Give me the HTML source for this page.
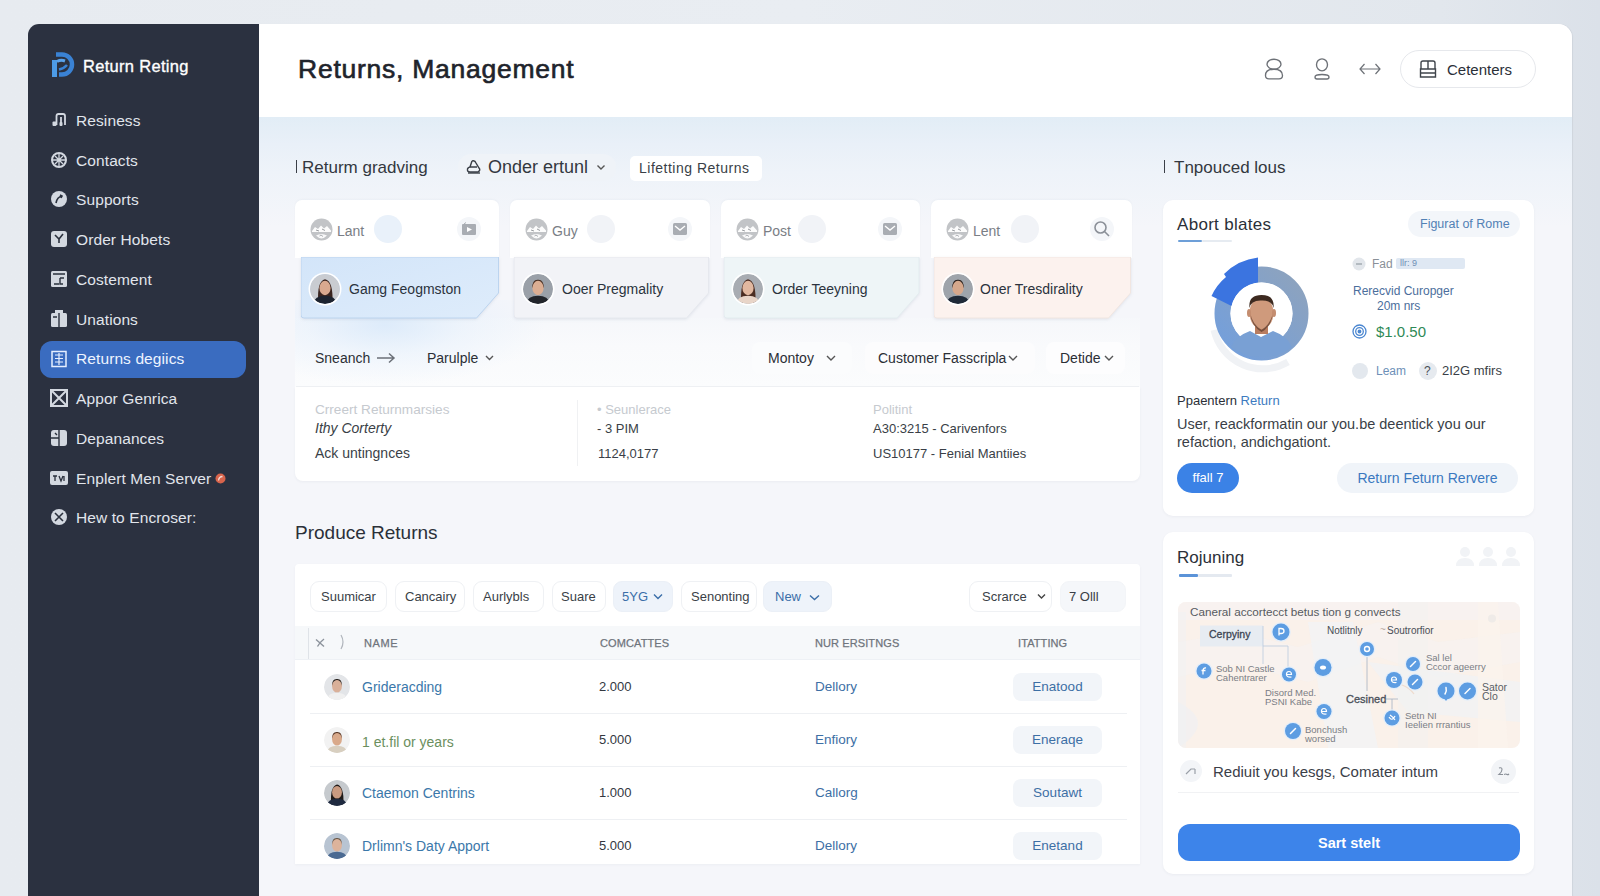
<!DOCTYPE html>
<html><head><meta charset="utf-8">
<style>
*{box-sizing:border-box;margin:0;padding:0}
html,body{width:1600px;height:896px;overflow:hidden}
body{font-family:"Liberation Sans",sans-serif;background:linear-gradient(90deg,#e7ebf0 0%,#e9edf2 50%,#e2e7ed 90%,#dbe1e9 100%);position:relative;color:#2a2f38}
.a{position:absolute}
.t{position:absolute;white-space:nowrap;line-height:1}
#side{left:28px;top:24px;width:231px;height:900px;background:#2b3140;border-top-left-radius:11px}
#main{left:259px;top:24px;width:1313px;height:900px;background:#f5f6fa;border-top-right-radius:14px;overflow:hidden;box-shadow:1px 0 1px rgba(0,0,0,0.06)}
#hdr{left:0;top:0;width:1313px;height:93px;background:#fff}
#grad{left:0;top:93px;width:1313px;height:110px;background:linear-gradient(180deg,#e2edf6 0%,#e9f0f8 25%,#eef3f9 50%,#f5f6fa 100%)}
.nav{position:absolute;left:76px;font-size:15.5px;color:#e1e5ec;line-height:1;letter-spacing:0.1px}
.ico{position:absolute;left:51px;width:17px;height:17px}
</style></head><body>
<div id="side" class="a"></div>
<div id="main" class="a">
  <div id="hdr" class="a"></div>
  <div id="grad" class="a"></div>
</div>
<!-- sidebar content -->
<svg class="a" style="left:50px;top:51px" width="26" height="28" viewBox="0 0 26 28">
  <path d="M4.5 9 V26" stroke="#4d9be6" stroke-width="5"/>
  <path d="M6 3.5 H12 A10 10 0 0 1 12 23.5 H9" fill="none" stroke="#3a82d4" stroke-width="4.5"/>
  <path d="M7 10.5 Q11 8.5 15 10" fill="none" stroke="#5aa2ea" stroke-width="3"/>
  <path d="M9 18.5 Q14 17.5 17 14" fill="none" stroke="#3a82d4" stroke-width="2.5"/>
</svg>
<div class="t" style="left:83px;top:58px;font-size:16.5px;color:#fff;-webkit-text-stroke:0.35px #fff;letter-spacing:0.3px">Return Reting</div>

<div class="a" style="left:40px;top:341px;width:206px;height:37px;border-radius:12px;background:#3a6cc0"></div>
<div class="nav" style="top:113px">Resiness</div>
<div class="nav" style="top:153px">Contacts</div>
<div class="nav" style="top:192px">Supports</div>
<div class="nav" style="top:232px">Order Hobets</div>
<div class="nav" style="top:272px">Costement</div>
<div class="nav" style="top:312px">Unations</div>
<div class="nav" style="top:351px;color:#eef4ff">Returns degiics</div>
<div class="nav" style="top:391px">Appor Genrica</div>
<div class="nav" style="top:431px">Depanances</div>
<div class="nav" style="top:471px">Enplert Men Server</div>
<div class="nav" style="top:510px">Hew to Encroser:</div>
<svg class="a" style="left:215px;top:473px" width="11" height="11" viewBox="0 0 11 11"><circle cx="5.5" cy="5.5" r="5" fill="#d8644c"/><path d="M3.5 7.5 Q4 3.5 7.5 3.5" fill="none" stroke="#f6dcd5" stroke-width="1.3"/></svg>
<svg class="a" style="left:50px;top:111px" width="20" height="420" viewBox="0 0 20 420" fill="#d3d8e0" stroke="#d3d8e0">
  <!-- Resiness y~121 -->
  <g transform="translate(0,0)"><rect x="2.5" y="10.5" width="4" height="4.5" rx="1" stroke="none"/><path d="M6.5 14 V5 Q6.5 3 8.5 3 H13 Q15 3 15 5 V14 M11 14 V6" fill="none" stroke-width="1.8"/><rect x="9.5" y="11" width="3" height="4" rx="1" stroke="none"/></g>
  <!-- Contacts y~160 -->
  <g transform="translate(0,40)"><circle cx="9" cy="9" r="7" fill="none" stroke-width="2"/><path d="M2 9 H16 M9 2 V16 M5 5 L13 13 M13 5 L5 13" fill="none" stroke-width="1.3"/></g>
  <!-- Supports y~199 -->
  <g transform="translate(0,79)"><circle cx="9" cy="9" r="8" stroke="none"/><path d="M6 13 Q7 7 12 6 M10 5 L12 6 L11 8" fill="none" stroke="#2a303d" stroke-width="1.6"/></g>
  <!-- Order Hobets y~239 -->
  <g transform="translate(0,119)"><rect x="1" y="1" width="16" height="16" rx="3" stroke="none"/><path d="M5 5 L9 9 L13 4 M9 9 V13" fill="none" stroke="#2a303d" stroke-width="1.6"/></g>
  <!-- Costement y~279 -->
  <g transform="translate(0,159)"><rect x="1" y="1" width="16" height="16" rx="1.5" stroke="none"/><path d="M3 4 H15 M4 14 H9 M10 8 V14 H13 M10 8 H14" fill="none" stroke="#2a303d" stroke-width="1.4"/></g>
  <!-- Unations y~319 -->
  <g transform="translate(0,199)"><rect x="1" y="3" width="16" height="14" rx="1.5" stroke="none"/><rect x="5" y="0" width="8" height="3" stroke="none"/><path d="M9 3 V17 M3 7 H7" fill="none" stroke="#2a303d" stroke-width="1.4"/></g>
  <!-- Returns y~358 -->
  <g transform="translate(0,239)"><rect x="2" y="1.5" width="14" height="15" fill="none" stroke="#e6efff" stroke-width="1.5"/><path d="M5 5 H13 M5 8.5 H13 M5 12 H13 M9 3 V15" fill="none" stroke="#e6efff" stroke-width="1.2"/></g>
  <!-- Appor y~398 -->
  <g transform="translate(0,278)"><rect x="1" y="1" width="16" height="16" fill="none" stroke-width="2"/><path d="M2 2 L16 16 M16 2 L2 16" fill="none" stroke-width="2"/></g>
  <!-- Depanances y~438 -->
  <g transform="translate(0,318)"><rect x="1" y="1" width="16" height="16" rx="3" stroke="none"/><path d="M9 1 V17 M1 9 H9 M5 4 L7 6" fill="none" stroke="#2a303d" stroke-width="1.4"/></g>
  <!-- Enplert y~478 -->
  <g transform="translate(0,358)"><rect x="0" y="2" width="18" height="14" rx="2" stroke="none"/><path d="M3 7 H7 M5 7 V12 M9 7 L11 12 L13 7 M14 7 V12" fill="none" stroke="#2a303d" stroke-width="1.3"/></g>
  <!-- Hew y~517 -->
  <g transform="translate(0,397)"><circle cx="9" cy="9" r="8" stroke="none"/><path d="M5 5 L13 13 M13 5 L5 13" fill="none" stroke="#2a303d" stroke-width="1.6"/></g>
</svg>

<!-- header -->
<div class="t" style="left:298px;top:56px;font-size:26.5px;color:#1f242c;-webkit-text-stroke:0.65px #1f242c;letter-spacing:0.75px">Returns, Management</div>
<svg class="a" style="left:1262px;top:57px" width="24" height="24" viewBox="0 0 24 24" fill="none" stroke="#6d7177" stroke-width="1.35">
  <ellipse cx="12" cy="7.2" rx="7" ry="5"/><path d="M12 12.2 Q20.5 12.2 20.5 18.5 Q20.5 21.8 17 21.8 H7 Q3.5 21.8 3.5 18.5 Q3.5 12.2 12 12.2 Z"/>
</svg>
<svg class="a" style="left:1310px;top:57px" width="24" height="24" viewBox="0 0 24 24" fill="none" stroke="#6d7177" stroke-width="1.35">
  <ellipse cx="12" cy="7.8" rx="5.5" ry="6"/><path d="M5 20 Q5 17.5 12 17.5 Q19 17.5 19 20 Q19 22 17 22 H7 Q5 22 5 20 Z"/>
</svg>
<svg class="a" style="left:1358px;top:59px" width="24" height="20" viewBox="0 0 24 20" fill="none" stroke="#6d7177" stroke-width="1.2">
  <path d="M2 10 H22 M6.5 5 L2 10 L6.5 15 M17.5 5 L22 10 L17.5 15"/>
</svg>
<div class="a" style="left:1400px;top:50px;width:136px;height:38px;border:1px solid #e6e8ec;border-radius:19px;background:#fff"></div>
<svg class="a" style="left:1419px;top:59px" width="18" height="20" viewBox="0 0 18 20" fill="none" stroke="#3f444b" stroke-width="1.4">
  <path d="M2 10 V4 Q2 2 4 2 H14 Q16 2 16 4 V10 M9 2 V10 M1.5 10 H16.5 V18 H1.5 Z M1.5 14 H16.5"/>
</svg>
<div class="t" style="left:1447px;top:62px;font-size:15px;color:#2a2f38">Cetenters</div>


<!-- ===== section 1 ===== -->
<div class="a" style="left:296px;top:160px;width:1px;height:13px;background:#3a3f47"></div>
<div class="t" style="left:302px;top:159px;font-size:17px;color:#33383f">Returm gradving</div>
<div class="a" style="left:458px;top:154px;width:158px;height:27px;border-radius:13px;background:#eff3f8"></div>
<svg class="a" style="left:465px;top:159px" width="18" height="16" viewBox="0 0 18 16" fill="none" stroke="#3a3f47" stroke-width="1.4">
 <path d="M7 2 Q10 1 11 4 L14 9 Q16 11 13 13 H5 Q2 13 2.5 10 Q3 8 6 8 H12 M7 2 L5 8"/><path d="M3 14 H15"/>
</svg>
<div class="t" style="left:488px;top:158px;font-size:18px;color:#33383f">Onder ertunl</div>
<svg class="a" style="left:596px;top:164px" width="10" height="7" viewBox="0 0 10 7" fill="none" stroke="#555" stroke-width="1.4"><path d="M1.5 1.5 L5 5 L8.5 1.5"/></svg>
<div class="a" style="left:630px;top:156px;width:132px;height:25px;border-radius:5px;background:#fff"></div>
<div class="t" style="left:639px;top:161px;font-size:14px;letter-spacing:0.5px;color:#3a3f47">Lifetting Returns</div>

<!-- filter/info panel -->
<div class="a" style="left:295px;top:387px;width:845px;height:94px;border-radius:0 0 8px 8px;background:#fff;box-shadow:0 1px 3px rgba(30,50,80,0.05)"></div>
<div class="a" style="left:295px;top:318px;width:845px;height:69px;background:linear-gradient(180deg,rgba(246,248,251,0.6) 0%,#f9fafc 40%,#fbfcfd 100%)"></div>
<div class="a" style="left:295px;top:300px;width:845px;height:87px;background:radial-gradient(ellipse 160px 60px at 90px 25px,rgba(215,232,250,0.8) 0%,rgba(225,238,252,0.4) 50%,rgba(255,255,255,0) 100%)"></div>
<div class="a" style="left:296px;top:386px;width:843px;height:1px;background:#eef0f3"></div>

<div class="a" style="left:295px;top:200px;width:204px;height:58px;border-radius:7px 7px 0 0;background:#fff;box-shadow:0 -1px 2px rgba(40,60,90,0.03)"></div>
<svg class="a" style="left:300.5px;top:257px;filter:drop-shadow(0 1.5px 1.5px rgba(40,60,100,0.10))" width="199.5" height="64" viewBox="0 0 199.5 64"><path d="M0 0 H197.5 V36 L175.5 61 H3 Q0 61 0 58 Z" fill="url(#c1g)" stroke="#bcd4ef" stroke-width="1"/><defs><linearGradient id="c1g" x1="0" y1="0" x2="1" y2="1"><stop offset="0" stop-color="#d3e5f9"/><stop offset="1" stop-color="#deecfb"/></linearGradient></defs></svg>
<svg class="a" style="left:310px;top:218px" width="23" height="23" viewBox="0 0 23 23"><circle cx="11.5" cy="11.5" r="11" fill="#c2c4c7"/><path d="M2 13 L5 9 L8 11 L11 7.5 L14 10.5 L17 8 L21 12.5 L21 14 H2 Z" fill="#fff" opacity="0.95"/><path d="M6 12 L9 13 M12 11 L15 12.5" stroke="#9a9da1" stroke-width="1"/><path d="M6 17.5 Q11.5 14.5 17 17.5 Q14 20.5 11.5 20.5 Q9 20.5 6 17.5 Z" fill="#fff" opacity="0.9"/><path d="M9.5 18 L11 17 L13 18.5" stroke="#a3a6aa" stroke-width="0.9" fill="none"/></svg>
<div class="t" style="left:337px;top:224px;font-size:14px;color:#7a7e85">Lant</div>
<div class="a" style="left:374px;top:215px;width:28px;height:28px;border-radius:50%;background:#e9f1fa"></div>
<div class="a" style="left:457px;top:217px;width:24px;height:24px;border-radius:50%;background:#f4f6f9"></div>
<svg class="a" style="left:461px;top:222px" width="16" height="14" viewBox="0 0 16 14"><rect x="1" y="2" width="14" height="11" rx="1" fill="#a9adb3"/><path d="M6 5 L11 7.5 L6 10 Z" fill="#fff"/><path d="M3 2 L5 0.5" stroke="#a9adb3"/></svg>
<svg class="a" style="left:310px;top:274px;border-radius:50%;box-shadow:0 0 0 1.5px #fff" width="30" height="30" viewBox="0 0 30 30"><clipPath id="c325_289"><circle cx="15" cy="15" r="15"/></clipPath><g clip-path="url(#c325_289)"><rect width="30" height="30" fill="#c9ccd1"/><path d="M8.25 28.5 Q6.75 7.5 15 5.25 Q23.25 6.75 22.5 28.5 Z" fill="#3a2520"/><ellipse cx="15" cy="14" rx="5.6" ry="7.2" fill="#d9a98f"/><path d="M3.0 30 Q4.5 21.75 15 21.75 Q25.5 21.75 27.0 30 Z" fill="#1d2430"/></g></svg>
<div class="t" style="left:349px;top:282px;font-size:14px;color:#2b333d">Gamg Feogmston</div>
<div class="a" style="left:510px;top:200px;width:200px;height:58px;border-radius:7px 7px 0 0;background:#fff;box-shadow:0 -1px 2px rgba(40,60,90,0.03)"></div>
<svg class="a" style="left:513.5px;top:257px;filter:drop-shadow(0 1.5px 1.5px rgba(40,60,100,0.10))" width="196.5" height="64" viewBox="0 0 196.5 64"><path d="M0 0 H194.5 V36 L172.5 61 H3 Q0 61 0 58 Z" fill="#f2f3f7" stroke="#e6e8ee" stroke-width="1"/></svg>
<svg class="a" style="left:525px;top:218px" width="23" height="23" viewBox="0 0 23 23"><circle cx="11.5" cy="11.5" r="11" fill="#c2c4c7"/><path d="M2 13 L5 9 L8 11 L11 7.5 L14 10.5 L17 8 L21 12.5 L21 14 H2 Z" fill="#fff" opacity="0.95"/><path d="M6 12 L9 13 M12 11 L15 12.5" stroke="#9a9da1" stroke-width="1"/><path d="M6 17.5 Q11.5 14.5 17 17.5 Q14 20.5 11.5 20.5 Q9 20.5 6 17.5 Z" fill="#fff" opacity="0.9"/><path d="M9.5 18 L11 17 L13 18.5" stroke="#a3a6aa" stroke-width="0.9" fill="none"/></svg>
<div class="t" style="left:552px;top:224px;font-size:14px;color:#7a7e85">Guy</div>
<div class="a" style="left:587px;top:215px;width:28px;height:28px;border-radius:50%;background:#f1f3f7"></div>
<div class="a" style="left:668px;top:217px;width:24px;height:24px;border-radius:50%;background:#f4f6f9"></div>
<svg class="a" style="left:672px;top:222px" width="16" height="14" viewBox="0 0 16 14"><rect x="1" y="1" width="14" height="12" rx="1.5" fill="#a9adb3"/><path d="M3 4 L8 8 L13 4" fill="none" stroke="#fff" stroke-width="1.4"/></svg>
<svg class="a" style="left:523px;top:274px;border-radius:50%;box-shadow:0 0 0 1.5px #fff" width="30" height="30" viewBox="0 0 30 30"><clipPath id="c538_289"><circle cx="15" cy="15" r="15"/></clipPath><g clip-path="url(#c538_289)"><rect width="30" height="30" fill="#9aa0a8"/><path d="M9.3 14.25 Q9.0 5.25 15 5.7 Q21.0 5.25 20.7 14.25 Q18.0 9.0 15 9.3 Q12.0 9.0 9.3 14.25 Z" fill="#4a3024"/><ellipse cx="15" cy="14" rx="5.6" ry="7.2" fill="#dcae93"/><path d="M3.0 30 Q4.5 21.75 15 21.75 Q25.5 21.75 27.0 30 Z" fill="#22252b"/></g></svg>
<div class="t" style="left:562px;top:282px;font-size:14px;color:#2b333d">Ooer Pregmality</div>
<div class="a" style="left:721px;top:200px;width:199px;height:58px;border-radius:7px 7px 0 0;background:#fff;box-shadow:0 -1px 2px rgba(40,60,90,0.03)"></div>
<svg class="a" style="left:724px;top:257px;filter:drop-shadow(0 1.5px 1.5px rgba(40,60,100,0.10))" width="197" height="64" viewBox="0 0 197 64"><path d="M0 0 H195 V36 L173 61 H3 Q0 61 0 58 Z" fill="#eef5f7" stroke="#e3ecef" stroke-width="1"/></svg>
<svg class="a" style="left:736px;top:218px" width="23" height="23" viewBox="0 0 23 23"><circle cx="11.5" cy="11.5" r="11" fill="#c2c4c7"/><path d="M2 13 L5 9 L8 11 L11 7.5 L14 10.5 L17 8 L21 12.5 L21 14 H2 Z" fill="#fff" opacity="0.95"/><path d="M6 12 L9 13 M12 11 L15 12.5" stroke="#9a9da1" stroke-width="1"/><path d="M6 17.5 Q11.5 14.5 17 17.5 Q14 20.5 11.5 20.5 Q9 20.5 6 17.5 Z" fill="#fff" opacity="0.9"/><path d="M9.5 18 L11 17 L13 18.5" stroke="#a3a6aa" stroke-width="0.9" fill="none"/></svg>
<div class="t" style="left:763px;top:224px;font-size:14px;color:#7a7e85">Post</div>
<div class="a" style="left:798px;top:215px;width:28px;height:28px;border-radius:50%;background:#f1f3f7"></div>
<div class="a" style="left:878px;top:217px;width:24px;height:24px;border-radius:50%;background:#f4f6f9"></div>
<svg class="a" style="left:882px;top:222px" width="16" height="14" viewBox="0 0 16 14"><rect x="1" y="1" width="14" height="12" rx="1.5" fill="#a9adb3"/><path d="M3 4 L8 8 L13 4" fill="none" stroke="#fff" stroke-width="1.4"/></svg>
<svg class="a" style="left:733px;top:274px;border-radius:50%;box-shadow:0 0 0 1.5px #fff" width="30" height="30" viewBox="0 0 30 30"><clipPath id="c748_289"><circle cx="15" cy="15" r="15"/></clipPath><g clip-path="url(#c748_289)"><rect width="30" height="30" fill="#a8acb2"/><path d="M8.25 28.5 Q6.75 7.5 15 5.25 Q23.25 6.75 22.5 28.5 Z" fill="#4b2d22"/><ellipse cx="15" cy="14" rx="5.6" ry="7.2" fill="#e1b8a0"/><path d="M3.0 30 Q4.5 21.75 15 21.75 Q25.5 21.75 27.0 30 Z" fill="#e8d5c8"/></g></svg>
<div class="t" style="left:772px;top:282px;font-size:14px;color:#2b333d">Order Teeyning</div>
<div class="a" style="left:931px;top:200px;width:201px;height:58px;border-radius:7px 7px 0 0;background:#fff;box-shadow:0 -1px 2px rgba(40,60,90,0.03)"></div>
<svg class="a" style="left:933.5px;top:257px;filter:drop-shadow(0 1.5px 1.5px rgba(40,60,100,0.10))" width="198.5" height="64" viewBox="0 0 198.5 64"><path d="M0 0 H196.5 V36 L174.5 61 H3 Q0 61 0 58 Z" fill="#fcf2ee" stroke="#f1e6e1" stroke-width="1"/></svg>
<svg class="a" style="left:946px;top:218px" width="23" height="23" viewBox="0 0 23 23"><circle cx="11.5" cy="11.5" r="11" fill="#c2c4c7"/><path d="M2 13 L5 9 L8 11 L11 7.5 L14 10.5 L17 8 L21 12.5 L21 14 H2 Z" fill="#fff" opacity="0.95"/><path d="M6 12 L9 13 M12 11 L15 12.5" stroke="#9a9da1" stroke-width="1"/><path d="M6 17.5 Q11.5 14.5 17 17.5 Q14 20.5 11.5 20.5 Q9 20.5 6 17.5 Z" fill="#fff" opacity="0.9"/><path d="M9.5 18 L11 17 L13 18.5" stroke="#a3a6aa" stroke-width="0.9" fill="none"/></svg>
<div class="t" style="left:973px;top:224px;font-size:14px;color:#7a7e85">Lent</div>
<div class="a" style="left:1011px;top:215px;width:28px;height:28px;border-radius:50%;background:#f1f3f7"></div>
<div class="a" style="left:1090px;top:217px;width:24px;height:24px;border-radius:50%;background:#f4f6f9"></div>
<svg class="a" style="left:1093px;top:220px" width="18" height="18" viewBox="0 0 18 18" fill="none" stroke="#8b9098" stroke-width="1.6"><circle cx="7.5" cy="7.5" r="5.5"/><path d="M11.5 11.5 L16 16"/></svg>
<svg class="a" style="left:943px;top:274px;border-radius:50%;box-shadow:0 0 0 1.5px #fff" width="30" height="30" viewBox="0 0 30 30"><clipPath id="c958_289"><circle cx="15" cy="15" r="15"/></clipPath><g clip-path="url(#c958_289)"><rect width="30" height="30" fill="#9ea4ab"/><path d="M9.3 14.25 Q9.0 5.25 15 5.7 Q21.0 5.25 20.7 14.25 Q18.0 9.0 15 9.3 Q12.0 9.0 9.3 14.25 Z" fill="#2c211d"/><ellipse cx="15" cy="14" rx="5.6" ry="7.2" fill="#d6a88c"/><path d="M3.0 30 Q4.5 21.75 15 21.75 Q25.5 21.75 27.0 30 Z" fill="#1f2a38"/></g></svg>
<div class="t" style="left:980px;top:282px;font-size:14px;color:#2b333d">Oner Tresdirality</div>

<div class="t" style="left:315px;top:351px;font-size:14px;color:#2b2f36">Sneanch</div>
<svg class="a" style="left:376px;top:352px" width="20" height="12" viewBox="0 0 20 12" fill="none" stroke="#6b7078" stroke-width="1.5"><path d="M1 6 H18 M13 1.5 L18 6 L13 10.5"/></svg>
<div class="t" style="left:427px;top:351px;font-size:14px;color:#2b2f36">Parulple</div>
<svg class="a" style="left:485px;top:355px" width="9" height="6" viewBox="0 0 9 6" fill="none" stroke="#555" stroke-width="1.4"><path d="M1 1 L4.5 4.5 L8 1"/></svg>

<div class="a" style="left:752px;top:342px;width:100px;height:32px;border-radius:8px;background:#fbfcfd"></div>
<div class="t" style="left:768px;top:351px;font-size:14px;color:#2b2f36">Montoy</div>
<svg class="a" style="left:826px;top:355px" width="10" height="6" viewBox="0 0 10 6" fill="none" stroke="#555" stroke-width="1.4"><path d="M1 1 L5 5 L9 1"/></svg>
<div class="a" style="left:865px;top:342px;width:170px;height:32px;border-radius:8px;background:#fcfcfd"></div>
<div class="t" style="left:878px;top:351px;font-size:14px;color:#2b2f36">Customer Fasscripla</div>
<svg class="a" style="left:1008px;top:355px" width="10" height="6" viewBox="0 0 10 6" fill="none" stroke="#555" stroke-width="1.4"><path d="M1 1 L5 5 L9 1"/></svg>
<div class="a" style="left:1046px;top:342px;width:79px;height:32px;border-radius:8px;background:#fdfdfe"></div>
<div class="t" style="left:1060px;top:351px;font-size:14px;color:#2b2f36">Detide</div>
<svg class="a" style="left:1104px;top:355px" width="10" height="6" viewBox="0 0 10 6" fill="none" stroke="#555" stroke-width="1.4"><path d="M1 1 L5 5 L9 1"/></svg>

<div class="a" style="left:577px;top:400px;width:1px;height:66px;background:#f0f1f3"></div>
<div class="t" style="left:315px;top:403px;font-size:13.6px;color:#c6cacf">Crreert Returnmarsies</div>
<div class="t" style="left:315px;top:421px;font-size:14px;color:#3a3f47;font-style:italic">Ithy Corterty</div>
<div class="t" style="left:315px;top:446px;font-size:14px;color:#3a3f47">Ack untingnces</div>
<div class="t" style="left:597px;top:403px;font-size:13px;color:#c6cacf">• Seunlerace</div>
<div class="t" style="left:597px;top:422px;font-size:13px;color:#3a3f47">- 3 PIM</div>
<div class="t" style="left:598px;top:447px;font-size:13px;color:#3a3f47">1124,0177</div>
<div class="t" style="left:873px;top:403px;font-size:13px;color:#c6cacf">Politint</div>
<div class="t" style="left:873px;top:422px;font-size:13px;color:#3a3f47">A30:3215 - Carivenfors</div>
<div class="t" style="left:873px;top:447px;font-size:13px;color:#3a3f47">US10177 - Fenial Mantiies</div>


<!-- ===== section 2: table ===== -->
<div class="t" style="left:295px;top:523px;font-size:19px;color:#2b3038">Produce Returns</div>
<div class="a" style="left:295px;top:564px;width:845px;height:300px;border-radius:4px 4px 0 0;background:#fff;box-shadow:0 1px 3px rgba(30,50,80,0.04)"></div>

<div class="a" style="left:310px;top:581px;width:77px;height:31px;border-radius:9px;background:#fff;border:1px solid #eff1f4"></div>
<div class="a" style="left:395px;top:581px;width:70px;height:31px;border-radius:9px;background:#fff;border:1px solid #eff1f4"></div>
<div class="a" style="left:473px;top:581px;width:71px;height:31px;border-radius:9px;background:#fff;border:1px solid #eff1f4"></div>
<div class="a" style="left:552px;top:581px;width:54px;height:31px;border-radius:9px;background:#fff;border:1px solid #eff1f4"></div>
<div class="a" style="left:613px;top:581px;width:60px;height:31px;border-radius:9px;background:#eef3fa;border:1px solid #ebf0f7"></div>
<div class="a" style="left:681px;top:581px;width:76px;height:31px;border-radius:9px;background:#fff;border:1px solid #eff1f4"></div>
<div class="a" style="left:763px;top:581px;width:69px;height:31px;border-radius:9px;background:#eef3fa;border:1px solid #ebf0f7"></div>
<div class="a" style="left:969px;top:581px;width:83px;height:31px;border-radius:9px;background:#fff;border:1px solid #eff1f4"></div>
<div class="a" style="left:1060px;top:581px;width:66px;height:31px;border-radius:9px;background:#f5f7fa;border:1px solid #f3f5f8"></div>

<div class="t" style="left:321px;top:590px;font-size:13px;color:#3a3f47">Suumicar</div>
<div class="t" style="left:405px;top:590px;font-size:13px;color:#3a3f47">Cancairy</div>
<div class="t" style="left:483px;top:590px;font-size:13px;color:#3a3f47">Aurlybls</div>
<div class="t" style="left:561px;top:590px;font-size:13px;color:#3a3f47">Suare</div>
<div class="t" style="left:622px;top:590px;font-size:13px;color:#3b6ea8">5YG</div>
<svg class="a" style="left:653px;top:593px" width="10" height="7" viewBox="0 0 10 7" fill="none" stroke="#3b6ea8" stroke-width="1.4"><path d="M1 1.5 L5 5.5 L9 1.5"/></svg>
<div class="t" style="left:691px;top:590px;font-size:13px;color:#3a3f47">Senonting</div>
<div class="t" style="left:775px;top:590px;font-size:13px;color:#3b6ea8">New</div>
<svg class="a" style="left:809px;top:594px" width="11" height="7" viewBox="0 0 11 7" fill="none" stroke="#3b6ea8" stroke-width="1.4"><path d="M1 1.5 L5.5 5.5 L10 1.5"/></svg>
<div class="t" style="left:982px;top:590px;font-size:13px;color:#3a3f47">Scrarce</div>
<svg class="a" style="left:1037px;top:593px" width="9" height="7" viewBox="0 0 9 7" fill="none" stroke="#444" stroke-width="1.4"><path d="M1 1.5 L4.5 5 L8 1.5"/></svg>
<div class="t" style="left:1069px;top:590px;font-size:13px;color:#3a3f47">7 Olll</div>

<div class="a" style="left:295px;top:626px;width:845px;height:34px;background:#f6f8fa;border-bottom:1px solid #eef1f5"></div>
<div class="a" style="left:308px;top:628px;width:1px;height:31px;background:#dfe3e8"></div>
<svg class="a" style="left:314px;top:637px" width="12" height="12" viewBox="0 0 12 12" fill="none" stroke="#8c939c" stroke-width="1.4"><path d="M2 2.5 L10 9.5 M10 2 Q6 5 3.5 9.5"/></svg>
<svg class="a" style="left:339px;top:634px" width="8" height="16" viewBox="0 0 8 16" fill="none" stroke="#b0b5bc" stroke-width="1.2"><path d="M2 1 Q6 8 2 15"/></svg>
<div class="t" style="left:364px;top:638px;font-size:11px;color:#6f747c;-webkit-text-stroke:0.25px #6f747c;letter-spacing:0.6px">NAME</div>
<div class="t" style="left:600px;top:638px;font-size:11px;color:#6f747c;-webkit-text-stroke:0.25px #6f747c;letter-spacing:0.1px">COMCATTES</div>
<div class="t" style="left:815px;top:638px;font-size:11px;color:#6f747c;-webkit-text-stroke:0.25px #6f747c;letter-spacing:0.1px">NUR ERSITNGS</div>
<div class="t" style="left:1018px;top:638px;font-size:11px;color:#6f747c;-webkit-text-stroke:0.25px #6f747c;letter-spacing:0.1px">ITATTING</div>

<svg class="a" style="left:324px;top:674px;border-radius:50%;box-shadow:0 0 0 1.5px #fff" width="26" height="26" viewBox="0 0 26 26"><clipPath id="cr337_687"><circle cx="13" cy="13" r="13"/></clipPath><g clip-path="url(#cr337_687)"><rect width="26" height="26" fill="#e3e5e8"/><path d="M8.06 12.35 Q7.8 4.55 13 4.94 Q18.2 4.55 17.939999999999998 12.35 Q15.6 7.8 13 8.06 Q10.4 7.8 8.06 12.35 Z" fill="#2a2420"/><ellipse cx="13" cy="12.2" rx="4.9" ry="6.3" fill="#d9b099"/><path d="M2.6 26 Q3.9 18.849999999999998 13 18.849999999999998 Q22.099999999999998 18.849999999999998 23.400000000000002 26 Z" fill="#f0f0f0"/></g></svg>
<div class="t" style="left:362px;top:680px;font-size:14px;color:#3b78aa">Grideracding</div>
<div class="t" style="left:599px;top:680px;font-size:13px;color:#33383f">2.000</div>
<div class="t" style="left:815px;top:680px;font-size:13.5px;color:#3d6fa5">Dellory</div>
<div class="a" style="left:1013px;top:673px;width:89px;height:28px;border-radius:8px;background:#f2f5f9"></div>
<div class="t" style="left:1013px;width:89px;text-align:center;top:680px;font-size:13.5px;color:#3d6fa5">Enatood</div>
<div class="a" style="left:310px;top:713px;width:817px;height:1px;background:#eef0f3"></div>
<svg class="a" style="left:324px;top:727px;border-radius:50%;box-shadow:0 0 0 1.5px #fff" width="26" height="26" viewBox="0 0 26 26"><clipPath id="cr337_740"><circle cx="13" cy="13" r="13"/></clipPath><g clip-path="url(#cr337_740)"><rect width="26" height="26" fill="#f2f2f2"/><path d="M8.06 12.35 Q7.8 4.55 13 4.94 Q18.2 4.55 17.939999999999998 12.35 Q15.6 7.8 13 8.06 Q10.4 7.8 8.06 12.35 Z" fill="#5a3a2a"/><ellipse cx="13" cy="12.2" rx="4.9" ry="6.3" fill="#d9a98a"/><path d="M2.6 26 Q3.9 18.849999999999998 13 18.849999999999998 Q22.099999999999998 18.849999999999998 23.400000000000002 26 Z" fill="#d8cfc0"/></g></svg>
<div class="t" style="left:362px;top:735px;font-size:14px;color:#6b8f5e">1 et.fil or years</div>
<div class="t" style="left:599px;top:733px;font-size:13px;color:#33383f">5.000</div>
<div class="t" style="left:815px;top:733px;font-size:13.5px;color:#3d6fa5">Enfiory</div>
<div class="a" style="left:1013px;top:726px;width:89px;height:28px;border-radius:8px;background:#f2f5f9"></div>
<div class="t" style="left:1013px;width:89px;text-align:center;top:733px;font-size:13.5px;color:#3d6fa5">Eneraqe</div>
<div class="a" style="left:310px;top:766px;width:817px;height:1px;background:#eef0f3"></div>
<svg class="a" style="left:324px;top:780px;border-radius:50%;box-shadow:0 0 0 1.5px #fff" width="26" height="26" viewBox="0 0 26 26"><clipPath id="cr337_793"><circle cx="13" cy="13" r="13"/></clipPath><g clip-path="url(#cr337_793)"><rect width="26" height="26" fill="#c6cace"/><path d="M7.15 24.7 Q5.8500000000000005 6.5 13 4.55 Q20.150000000000002 5.8500000000000005 19.5 24.7 Z" fill="#201a18"/><ellipse cx="13" cy="12.2" rx="4.9" ry="6.3" fill="#c99a80"/><path d="M2.6 26 Q3.9 18.849999999999998 13 18.849999999999998 Q22.099999999999998 18.849999999999998 23.400000000000002 26 Z" fill="#1f2a40"/></g></svg>
<div class="t" style="left:362px;top:786px;font-size:14px;color:#3b78aa">Ctaemon Centrins</div>
<div class="t" style="left:599px;top:786px;font-size:13px;color:#33383f">1.000</div>
<div class="t" style="left:815px;top:786px;font-size:13.5px;color:#3d6fa5">Callorg</div>
<div class="a" style="left:1013px;top:779px;width:89px;height:28px;border-radius:8px;background:#f2f5f9"></div>
<div class="t" style="left:1013px;width:89px;text-align:center;top:786px;font-size:13.5px;color:#3d6fa5">Soutawt</div>
<div class="a" style="left:310px;top:819px;width:817px;height:1px;background:#eef0f3"></div>
<svg class="a" style="left:324px;top:833px;border-radius:50%;box-shadow:0 0 0 1.5px #fff" width="26" height="26" viewBox="0 0 26 26"><clipPath id="cr337_846"><circle cx="13" cy="13" r="13"/></clipPath><g clip-path="url(#cr337_846)"><rect width="26" height="26" fill="#b8c4d2"/><path d="M8.06 12.35 Q7.8 4.55 13 4.94 Q18.2 4.55 17.939999999999998 12.35 Q15.6 7.8 13 8.06 Q10.4 7.8 8.06 12.35 Z" fill="#6b5a4a"/><ellipse cx="13" cy="12.2" rx="4.9" ry="6.3" fill="#dcb39b"/><path d="M2.6 26 Q3.9 18.849999999999998 13 18.849999999999998 Q22.099999999999998 18.849999999999998 23.400000000000002 26 Z" fill="#4b6a92"/></g></svg>
<div class="t" style="left:362px;top:839px;font-size:14px;color:#3b78aa">Drlimn's Daty Apport</div>
<div class="t" style="left:599px;top:839px;font-size:13px;color:#33383f">5.000</div>
<div class="t" style="left:815px;top:839px;font-size:13.5px;color:#3d6fa5">Dellory</div>
<div class="a" style="left:1013px;top:832px;width:89px;height:28px;border-radius:8px;background:#f2f5f9"></div>
<div class="t" style="left:1013px;width:89px;text-align:center;top:839px;font-size:13.5px;color:#3d6fa5">Enetand</div>

<!-- ===== right column ===== -->
<div class="a" style="left:1164px;top:160px;width:1px;height:13px;background:#3a3f47"></div>
<div class="t" style="left:1174px;top:159px;font-size:17px;color:#33383f">Tnpouced lous</div>

<div class="a" style="left:1163px;top:200px;width:371px;height:316px;border-radius:10px;background:#fff;box-shadow:0 1px 3px rgba(30,50,80,0.05)"></div>
<div class="t" style="left:1177px;top:216px;font-size:17px;letter-spacing:0.3px;color:#2b3038">Abort blates</div>
<div class="a" style="left:1178px;top:240px;width:24px;height:2px;background:#6d9fd8;border-radius:1px"></div>
<div class="a" style="left:1202px;top:240px;width:30px;height:2px;background:#e6ebf1;border-radius:1px"></div>
<div class="a" style="left:1408px;top:211px;width:112px;height:26px;border-radius:13px;background:#f3f6fa"></div>
<div class="t" style="left:1420px;top:218px;font-size:12.5px;color:#5281b5">Figurat of Rome</div>

<svg class="a" style="left:1200px;top:252px" width="124" height="124" viewBox="0 0 124 124">
  <defs>
   <linearGradient id="ringg" x1="0" y1="1" x2="1" y2="0"><stop offset="0" stop-color="#739fdc"/><stop offset="1" stop-color="#8ea3bd"/></linearGradient>
   <clipPath id="inner"><circle cx="61.5" cy="61.5" r="31"/></clipPath>
  </defs>
  <path d="M 14 78 A 50 50 0 0 0 88 110" fill="none" stroke="#f0f2f5" stroke-width="7"/>
  <circle cx="61.5" cy="61.5" r="39" fill="none" stroke="url(#ringg)" stroke-width="16"/>
  <path d="M 11.5 44 A 53 53 0 0 1 26 25 L 24 22 A 57 57 0 0 1 58 5.5 L 58 30.5 A 31 31 0 0 0 31.5 54 Z" fill="#3b74e0"/>
  <circle cx="61.5" cy="61.5" r="31" fill="#fff"/>
  <path d="M 31 95 Q 36 84 50 79 L 61 85 L 73 79 Q 87 84 92 95 Q 80 105 62 105 Q 44 105 31 95 Z" fill="#79a0d4"/>
  <rect x="55" y="72" width="13" height="10" fill="#b97d60"/>
  <ellipse cx="61.5" cy="61" rx="12" ry="16" fill="#cf9a7c"/>
  <path d="M 50 60 Q 52 72 61.5 78 Q 71 72 73 60 Q 72 74 61.5 80 Q 51 74 50 60 Z" fill="#6b4636" opacity="0.85"/>
  <path d="M 49.5 56 Q 48 43 61.5 43 Q 75 43 73.5 56 Q 72 48 61.5 48.5 Q 51 48 49.5 56 Z" fill="#3d2a20"/>
  <ellipse cx="49" cy="61" rx="2" ry="4" fill="#c48d70"/><ellipse cx="74" cy="61" rx="2" ry="4" fill="#c48d70"/>
</svg>
<svg class="a" style="left:1352px;top:257px" width="14" height="14" viewBox="0 0 14 14"><circle cx="7" cy="7" r="6.5" fill="#e2e6eb"/><path d="M4 7 H10" stroke="#a0a6ae" stroke-width="1.4"/></svg>
<div class="t" style="left:1372px;top:258px;font-size:12px;color:#8a9098">Fad</div>
<div class="a" style="left:1396px;top:258px;width:69px;height:11px;border-radius:2px;background:#dfe8f3"></div>
<div class="t" style="left:1400px;top:259px;font-size:9px;color:#6f8fb5">llr: 9</div>
<div class="t" style="left:1353px;top:285px;font-size:12px;color:#4b6e9c">Rerecvid Curopger</div>
<div class="t" style="left:1377px;top:300px;font-size:12px;color:#4b6e9c">20m nrs</div>
<svg class="a" style="left:1352px;top:324px" width="15" height="15" viewBox="0 0 15 15" fill="none" stroke="#4a86d0" stroke-width="1.3"><circle cx="7.5" cy="7.5" r="6.5"/><circle cx="7.5" cy="7.5" r="3.8"/><circle cx="7.5" cy="7.5" r="1.3" fill="#4a86d0"/></svg>
<div class="t" style="left:1376px;top:324px;font-size:15px;color:#2f8a56">$1.0.50</div>
<div class="a" style="left:1352px;top:363px;width:16px;height:16px;border-radius:50%;background:#e3e8ee"></div>
<div class="t" style="left:1376px;top:365px;font-size:12px;color:#6d8fb8">Leam</div>
<div class="a" style="left:1419px;top:362px;width:18px;height:18px;border-radius:50%;background:#e6eaef"></div>
<div class="t" style="left:1424px;top:365px;font-size:12px;color:#4a4f57">?</div>
<div class="t" style="left:1442px;top:364px;font-size:13px;color:#3a3f47">2I2G mfirs</div>

<div class="t" style="left:1177px;top:394px;font-size:13px;color:#2b3038">Ppaentern <span style="color:#3d7bc0">Return</span></div>
<div class="t" style="left:1177px;top:417px;font-size:14.5px;color:#3a3f47">User, reackformatin our you.be deentick you our</div>
<div class="t" style="left:1177px;top:435px;font-size:14.5px;color:#3a3f47">refaction, andichgationt.</div>
<div class="a" style="left:1177px;top:463px;width:62px;height:30px;border-radius:15px;background:#3b82e6"></div>
<div class="t" style="left:1177px;width:62px;text-align:center;top:471px;font-size:13px;color:#fff">ffall 7</div>
<div class="a" style="left:1337px;top:463px;width:181px;height:30px;border-radius:15px;background:#f0f4f9"></div>
<div class="t" style="left:1337px;width:181px;text-align:center;top:471px;font-size:14px;color:#3a78c0">Return Feturn Rervere</div>

<div class="a" style="left:1163px;top:532px;width:371px;height:342px;border-radius:10px;background:#fff;box-shadow:0 1px 3px rgba(30,50,80,0.05)"></div>
<div class="t" style="left:1177px;top:549px;font-size:17px;color:#2b3038">Rojuning</div>
<div class="a" style="left:1179px;top:574px;width:19px;height:2.5px;background:#5b93d8;border-radius:1px"></div>
<div class="a" style="left:1198px;top:574px;width:34px;height:2.5px;background:#e4e9f0;border-radius:1px"></div>
<svg class="a" style="left:1453px;top:544px" width="70" height="24" viewBox="0 0 70 24" fill="#f1f3f6">
  <circle cx="12" cy="8" r="5"/><path d="M3 22 Q3 14 12 14 Q21 14 21 22Z"/>
  <circle cx="35" cy="8" r="5"/><path d="M26 22 Q26 14 35 14 Q44 14 44 22Z"/>
  <circle cx="58" cy="8" r="5"/><path d="M49 22 Q49 14 58 14 Q67 14 67 22Z"/>
</svg>
<svg class="a" style="left:1178px;top:602px" width="342" height="146" viewBox="0 0 342 146"><defs><clipPath id="mapclip"><rect width="342" height="146" rx="8"/></clipPath></defs><g clip-path="url(#mapclip)"><rect width="342" height="146" fill="#faf1ea"/><path d="M0 0 H342 V18 H0 Z" fill="#f6f4f3" opacity="0.6"/><path d="M0 40 L60 30 L120 45 L200 20 L260 40 L342 30 V60 L260 75 L200 55 L130 80 L60 62 L0 75 Z" fill="#f5f4f4" opacity="0.5"/><path d="M130 20 L175 20 L200 146 L150 146 Z" fill="#f1f3f6" opacity="0.7"/><path d="M190 60 L342 80 L342 120 L230 110 Z" fill="#eff2f5" opacity="0.7"/><path d="M220 0 L250 0 L250 146 L220 146 Z" fill="#f2f1f0" opacity="0.5"/><path d="M300 0 L320 0 L330 146 L300 146 Z" fill="#fbf3ed" opacity="0.7"/><path d="M0 100 Q40 120 0 146 Z" fill="#eff0f3" opacity="0.6"/><path d="M0 10 L8 10 L8 146 L0 146 Z" fill="#eff1f4" opacity="0.5"/><rect x="22" y="23.5" width="63" height="21" fill="#e7ecf2"/><path d="M85 44 H110 V72 M85 24 V62" fill="none" stroke="#b9cade" stroke-width="0.8"/><path d="M189 55 V89 M214 97 V114 M208 97 H220" fill="none" stroke="#a3b2c4" stroke-width="0.8"/><path d="M222 82 Q232 86 236 92" fill="none" stroke="#ecd2bf" stroke-width="1.2" opacity="0.7"/><circle cx="314" cy="16.5" r="4" fill="#efebe8"/><circle cx="103" cy="30" r="9.8" fill="#e3eefa"/><circle cx="103" cy="30" r="8.5" fill="#5d9de2"/><path d="M101 33.5 V26.5 H103 Q106 26.5 106 29 Q106 31.5 103 31.5 H101" fill="none" stroke="#fff" stroke-width="1.3"/><circle cx="26" cy="69" r="8.8" fill="#e3eefa"/><circle cx="26" cy="69" r="7.5" fill="#5d9de2"/><path d="M28 66 Q25 65.5 25 69 V72.5 M23.5 68.5 H27.5" fill="none" stroke="#fff" stroke-width="1.3"/><circle cx="111" cy="72.5" r="8.3" fill="#e3eefa"/><circle cx="111" cy="72.5" r="7" fill="#5d9de2"/><path d="M108.5 72.5 H113.5 Q113.5 69.5 111 69.5 Q108.2 69.5 108.5 73.0 Q109 75.5 113.5 75.0" fill="none" stroke="#fff" stroke-width="1.2"/><circle cx="145" cy="65.5" r="9.8" fill="#e3eefa"/><circle cx="145" cy="65.5" r="8.5" fill="#5d9de2"/><ellipse cx="145" cy="65.5" rx="3" ry="2" fill="#fff"/><circle cx="146" cy="109.5" r="8.8" fill="#e3eefa"/><circle cx="146" cy="109.5" r="7.5" fill="#5d9de2"/><path d="M143.5 109.5 H148.5 Q148.5 106.5 146 106.5 Q143.2 106.5 143.5 110.0 Q144 112.5 148.5 112.0" fill="none" stroke="#fff" stroke-width="1.2"/><circle cx="115" cy="129" r="9.3" fill="#e3eefa"/><circle cx="115" cy="129" r="8" fill="#5d9de2"/><path d="M112.5 131.5 L117.5 126.5" stroke="#fff" stroke-width="1.5" stroke-linecap="round"/><circle cx="189" cy="47" r="8.3" fill="#e3eefa"/><circle cx="189" cy="47" r="7" fill="#5d9de2"/><circle cx="189" cy="47" r="2.5" fill="none" stroke="#fff" stroke-width="1.4"/><circle cx="214" cy="116" r="8.8" fill="#e3eefa"/><circle cx="214" cy="116" r="7.5" fill="#5d9de2"/><path d="M211 115 Q214 120 217 114 M212 113 Q215 115 217 118" fill="none" stroke="#fff" stroke-width="1.2"/><circle cx="235" cy="62" r="8.3" fill="#e3eefa"/><circle cx="235" cy="62" r="7" fill="#5d9de2"/><path d="M232.5 64.5 L237.5 59.5" stroke="#fff" stroke-width="1.5" stroke-linecap="round"/><circle cx="216" cy="78" r="9.3" fill="#e3eefa"/><circle cx="216" cy="78" r="8" fill="#5d9de2"/><path d="M213.5 78 H218.5 Q218.5 75 216 75 Q213.2 75 213.5 78.5 Q214 81 218.5 80.5" fill="none" stroke="#fff" stroke-width="1.2"/><circle cx="237" cy="80" r="8.8" fill="#e3eefa"/><circle cx="237" cy="80" r="7.5" fill="#5d9de2"/><path d="M234.5 82.5 L239.5 77.5" stroke="#fff" stroke-width="1.5" stroke-linecap="round"/><circle cx="268" cy="89" r="9.8" fill="#e3eefa"/><circle cx="268" cy="89" r="8.5" fill="#5d9de2"/><path d="M268 85.5 Q269 89 267 92" fill="none" stroke="#fff" stroke-width="1.5" stroke-linecap="round"/><path d="M266 96 L268 99 L270 96" fill="#5d9de2"/><circle cx="289.5" cy="89" r="9.8" fill="#e3eefa"/><circle cx="289.5" cy="89" r="8.5" fill="#5d9de2"/><path d="M287.0 91.5 L292.0 86.5" stroke="#fff" stroke-width="1.5" stroke-linecap="round"/></g></svg>
<div class="t" style="left:1190px;top:606px;font-size:11.7px;color:#565a61">Caneral accortecct betus tion g convects</div>
<div class="t" style="left:1209px;top:629px;font-size:10.5px;color:#3d4553;-webkit-text-stroke:0.3px #3d4553">Cerpyiny</div>
<div class="t" style="left:1327px;top:626px;font-size:10px;color:#4a4f57">Notlitnly</div>
<div class="t" style="left:1380px;top:625px;font-size:10px;color:#b9a9a0">~</div>
<div class="t" style="left:1387px;top:626px;font-size:10px;color:#4a4f57">Soutrorfior</div>
<div class="t" style="left:1216px;top:664px;font-size:9.5px;color:#7a7e85;line-height:9px">Sob NI Castle<br>Cahentrarer</div>
<div class="t" style="left:1265px;top:688px;font-size:9.5px;color:#7a7e85;line-height:9px">Disord Med.<br>PSNI Kabe</div>
<div class="t" style="left:1305px;top:725px;font-size:9.5px;color:#7a7e85;line-height:9px">Bonchush<br>worsed</div>
<div class="t" style="left:1346px;top:694px;font-size:11px;color:#4a5059;-webkit-text-stroke:0.3px #4a5059">Cesined</div>
<div class="t" style="left:1405px;top:711px;font-size:9.5px;color:#7a7e85;line-height:9px">Setn NI<br>Ieelien rrrantius</div>
<div class="t" style="left:1426px;top:653px;font-size:9.5px;color:#7a7e85;line-height:9px">Sal lel<br>Cccor ageerry</div>
<div class="t" style="left:1482px;top:683px;font-size:10.5px;color:#5a5f66;line-height:9px">Sator<br>Clo</div>

<div class="a" style="left:1180px;top:760px;width:22px;height:22px;border-radius:50%;background:#f3f5f8"></div>
<svg class="a" style="left:1184px;top:764px" width="14" height="14" viewBox="0 0 14 14" fill="none" stroke="#9aa0a8" stroke-width="1.2"><path d="M2 10 L7 5 L11 5 M11 5 V10"/></svg>
<div class="t" style="left:1213px;top:764px;font-size:15px;color:#3b4048">Rediuit you kesgs, Comater intum</div>
<div class="a" style="left:1491px;top:759px;width:25px;height:25px;border-radius:50%;background:#f2f4f7"></div>
<svg class="a" style="left:1497px;top:766px" width="14" height="11" viewBox="0 0 14 11" fill="none" stroke="#8a9098" stroke-width="1.1"><path d="M2 2 Q5 1 5 3.5 Q5 6 2 8.5 H6 M7 8.5 Q9 7.5 10 8.5 Q11 9 12 8"/></svg>
<div class="a" style="left:1178px;top:792px;width:341px;height:1px;background:#f1f2f4"></div>
<div class="a" style="left:1178px;top:824px;width:342px;height:37px;border-radius:12px;background:#3d84ea"></div>
<div class="t" style="left:1178px;width:342px;text-align:center;top:836px;font-size:14.5px;color:#fff;font-weight:bold">Sart stelt</div>

</body></html>
